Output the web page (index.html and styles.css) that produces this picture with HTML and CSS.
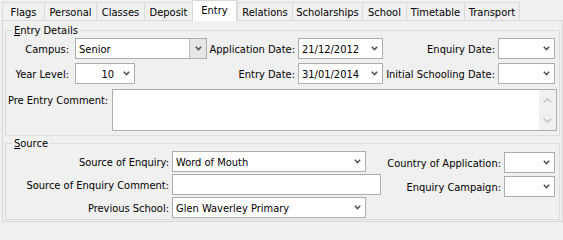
FILE: index.html
```html
<!DOCTYPE html>
<html>
<head>
<meta charset="utf-8">
<title>Entry</title>
<link rel="stylesheet" href="styles.css">
</head>
<body>
<div class="window">
  <div class="tabs">
    <div class="tab w-flags">Flags</div>
    <div class="tab w-personal">Personal</div>
    <div class="tab w-classes">Classes</div>
    <div class="tab w-deposit">Deposit</div>
    <div class="tab tab-active w-entry">Entry</div>
    <div class="tab w-relations">Relations</div>
    <div class="tab w-scholarships">Scholarships</div>
    <div class="tab w-school">School</div>
    <div class="tab w-timetable">Timetable</div>
    <div class="tab tab-last w-transport">Transport</div>
  </div>
  <div class="panel">
    <fieldset class="group group-entry">
      <legend><u>E</u>ntry Details</legend>
      <div class="entry-grid">
        <label class="lbl lbl-c1">Campus:</label>
        <div class="combo w-campus"><span class="val">Senior</span><span class="btn btn-framed"><svg class="chev" width="7" height="5" viewBox="0 0 7 5"><polyline points="0.8,0.8 3.5,3.6 6.2,0.8"/></svg></span></div>
        <label class="lbl lbl-c3">Application Date:</label>
        <div class="combo"><span class="val">21/12/2012</span><span class="btn"><svg class="chev" width="7" height="5" viewBox="0 0 7 5"><polyline points="0.8,0.8 3.5,3.6 6.2,0.8"/></svg></span></div>
        <label class="lbl lbl-c5">Enquiry Date:</label>
        <div class="combo"><span class="val"></span><span class="btn"><svg class="chev" width="7" height="5" viewBox="0 0 7 5"><polyline points="0.8,0.8 3.5,3.6 6.2,0.8"/></svg></span></div>

        <label class="lbl lbl-c1">Year Level:</label>
        <div class="combo w-year"><span class="val val-right">10</span><span class="btn"><svg class="chev" width="7" height="5" viewBox="0 0 7 5"><polyline points="0.8,0.8 3.5,3.6 6.2,0.8"/></svg></span></div>
        <label class="lbl lbl-c3">Entry Date:</label>
        <div class="combo"><span class="val">31/01/2014</span><span class="btn"><svg class="chev" width="7" height="5" viewBox="0 0 7 5"><polyline points="0.8,0.8 3.5,3.6 6.2,0.8"/></svg></span></div>
        <label class="lbl lbl-c5">Initial Schooling Date:</label>
        <div class="combo"><span class="val"></span><span class="btn"><svg class="chev" width="7" height="5" viewBox="0 0 7 5"><polyline points="0.8,0.8 3.5,3.6 6.2,0.8"/></svg></span></div>
      </div>
      <div class="comment-row">
        <label class="lbl-top">Pre Entry Comment:</label>
        <div class="memo">
          <textarea class="memo-text"></textarea>
          <div class="vscroll">
            <svg class="sarrow" width="9" height="5" viewBox="0 0 9 5"><polyline points="0.8,4.2 4.5,0.8 8.2,4.2"/></svg>
            <svg class="sarrow" width="9" height="5" viewBox="0 0 9 5"><polyline points="0.8,0.8 4.5,4.2 8.2,0.8"/></svg>
          </div>
        </div>
      </div>
    </fieldset>

    <fieldset class="group group-source">
      <legend><u>S</u>ource</legend>
      <div class="source-body">
        <div class="source-left">
          <label class="lbl lbl-src">Source of Enquiry:</label>
          <div class="combo w-src"><span class="val">Word of Mouth</span><span class="btn"><svg class="chev" width="7" height="5" viewBox="0 0 7 5"><polyline points="0.8,0.8 3.5,3.6 6.2,0.8"/></svg></span></div>
          <label class="lbl lbl-src">Source of Enquiry Comment:</label>
          <input class="edit w-comment" type="text" value="">
          <label class="lbl lbl-src">Previous School:</label>
          <div class="combo w-src"><span class="val">Glen Waverley Primary</span><span class="btn"><svg class="chev" width="7" height="5" viewBox="0 0 7 5"><polyline points="0.8,0.8 3.5,3.6 6.2,0.8"/></svg></span></div>
        </div>
        <div class="source-right">
          <label class="lbl lbl-src">Country of Application:</label>
          <div class="combo"><span class="val"></span><span class="btn"><svg class="chev" width="7" height="5" viewBox="0 0 7 5"><polyline points="0.8,0.8 3.5,3.6 6.2,0.8"/></svg></span></div>
          <label class="lbl lbl-src">Enquiry Campaign:</label>
          <div class="combo"><span class="val"></span><span class="btn"><svg class="chev" width="7" height="5" viewBox="0 0 7 5"><polyline points="0.8,0.8 3.5,3.6 6.2,0.8"/></svg></span></div>
        </div>
      </div>
    </fieldset>
  </div>
</div>
</body>
</html>
```

FILE: styles.css
```css
* {
  box-sizing: border-box;
}

html, body {
  margin: 0;
  padding: 0;
  background: #f0f0f0;
}

body {
  width: 563px;
  height: 222px;
  overflow: hidden;
  font-family: "DejaVu Sans Condensed", "DejaVu Sans", sans-serif;
  font-size: 11px;
  line-height: 13px;
  color: #000;
}

.window {
  padding: 2px 0 0 2px;
}

/* ---------- tab strip ---------- */
.tabs {
  display: flex;
  height: 18px;
  align-items: flex-start;
}

.tab {
  height: 18px;
  border-top: 1px solid #d9d9d9;
  border-left: 1px solid #d9d9d9;
  padding-top: 3px;
  text-align: center;
  white-space: nowrap;
  background: #f0f0f0;
}

.tab-active {
  height: 21px;
  margin-top: -2px;
  padding-top: 3px;
  background: #fff;
  border-right: 1px solid #d9d9d9;
  position: relative;
  z-index: 1;
}

.tab-last {
  border-right: 1px solid #d9d9d9;
}

.w-flags { width: 42px; }
.w-personal { width: 52px; }
.w-classes { width: 48px; }
.w-deposit { width: 48px; }
.w-entry { width: 45px; }
.w-relations { width: 55px; }
.w-scholarships { width: 70px; }
.w-school { width: 44px; }
.w-timetable { width: 58px; }
.w-transport { width: 56px; }

/* ---------- page panel ---------- */
.panel {
  width: 561px;
  height: 202px;
  border: 1px solid #d9d9d9;
  padding: 3px 2px 0;
  background: #f0f0f0;
}

.group {
  margin: 0;
  padding: 0;
  border: 1px solid #dcdcdc;
  min-width: 0;
}

.group legend {
  margin-left: 6px;
  padding: 0 2px;
  line-height: 13px;
}

.group-entry {
  padding-bottom: 4px;
}

.group-source {
  margin-top: 1px;
}

/* ---------- labels ---------- */
.lbl {
  text-align: right;
  white-space: nowrap;
  line-height: 21px;
  padding-top: 1px;
}

.lbl-c1 { padding-right: 6px; }
.lbl-c3 { padding-right: 3px; }
.lbl-c5 { padding-right: 3px; }
.lbl-src { padding-right: 3px; }

/* ---------- combos / edits ---------- */
.combo {
  height: 21px;
  border: 1px solid #adadad;
  background: #fff;
  display: flex;
  align-items: stretch;
}

.combo .val {
  flex: 1;
  min-width: 0;
  padding-left: 3px;
  padding-top: 1px;
  line-height: 19px;
  white-space: nowrap;
  overflow: hidden;
}

.combo .val-right {
  text-align: right;
  padding-right: 4px;
}

.combo .btn {
  width: 16px;
  display: flex;
  align-items: center;
  justify-content: center;
}

.combo .btn-framed {
  width: 17px;
  border-left: 1px solid #bcbcbc;
  background: #e6e6e6;
}

.chev polyline {
  fill: none;
  stroke: #505050;
  stroke-width: 1.5;
}

.edit {
  height: 21px;
  border: 1px solid #adadad;
  background: #fff;
  margin: 0;
  padding: 0 3px;
  font: inherit;
  outline: none;
}

/* ---------- entry details ---------- */
.entry-grid {
  display: grid;
  grid-template-columns: 69px 132px 91px 85px 115px 57px;
  grid-auto-rows: 21px;
  row-gap: 4px;
  padding-top: 1px;
}

.w-campus { width: 132px; }
.w-year { width: 60px; }

.comment-row {
  display: flex;
  margin-top: 5px;
  padding-right: 2px;
}

.lbl-top {
  width: 106px;
  padding-left: 2px;
  padding-top: 5px;
  white-space: nowrap;
}

.memo {
  flex: 1;
  height: 42px;
  border: 1px solid #adadad;
  background: #fff;
  display: flex;
}

.memo-text {
  flex: 1;
  border: 0;
  margin: 0;
  padding: 2px 3px;
  resize: none;
  outline: none;
  background: transparent;
  font: inherit;
}

.vscroll {
  width: 17px;
  background: #f0f0f0;
  display: flex;
  flex-direction: column;
  align-items: center;
  justify-content: space-between;
  padding: 8px 0 7px;
}

.sarrow polyline {
  fill: none;
  stroke: #c2c2c2;
  stroke-width: 1.5;
}

/* ---------- source ---------- */
.source-body {
  display: flex;
  align-items: flex-start;
  padding: 1px 0 1px;
}

.source-left {
  display: grid;
  grid-template-columns: 166px auto;
  grid-auto-rows: 21px;
  row-gap: 2px;
  justify-items: start;
}

.source-left .lbl {
  justify-self: stretch;
}

.w-src { width: 194px; }
.w-comment { width: 209px; }

.source-right {
  margin-left: auto;
  margin-right: 4px;
  padding-top: 1px;
  display: grid;
  grid-template-columns: auto 51px;
  grid-auto-rows: 21px;
  row-gap: 3px;
}
```
